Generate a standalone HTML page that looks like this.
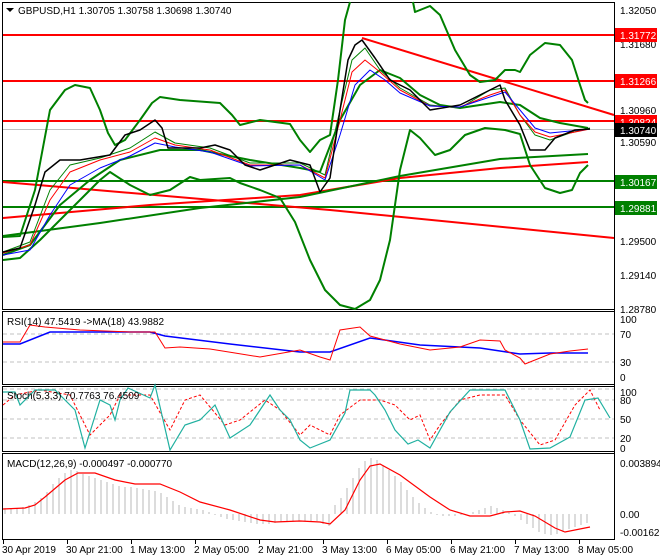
<!DOCTYPE html>
<html><head><meta charset="utf-8"><style>
html,body{margin:0;padding:0;background:#fff;}
svg{display:block;font-family:"Liberation Sans",sans-serif;font-size:10px;}
</style></head><body>
<svg width="660" height="560" viewBox="0 0 660 560" xmlns="http://www.w3.org/2000/svg">
<rect width="660" height="560" fill="#fff"/>
<g fill="none" stroke="#000" stroke-width="1">
<rect x="2.5" y="2.5" width="612" height="307"/>
<rect x="2.5" y="311.5" width="612" height="73"/>
<rect x="2.5" y="386.5" width="612" height="65"/>
<rect x="2.5" y="453.5" width="612" height="86"/>
</g>
<g fill="none" stroke-linejoin="round">
<line x1="3" y1="129.5" x2="614" y2="129.5" stroke="#c0c0c0"/>
<line x1="3" y1="35" x2="614" y2="35" stroke="#f00" stroke-width="2"/>
<line x1="3" y1="81" x2="614" y2="81" stroke="#f00" stroke-width="2"/>
<line x1="3" y1="121" x2="614" y2="121" stroke="#f00" stroke-width="2"/>
<line x1="3" y1="181" x2="614" y2="181" stroke="#008000" stroke-width="2"/>
<line x1="3" y1="207" x2="614" y2="207" stroke="#008000" stroke-width="2"/>
<polyline stroke="#f00" stroke-width="2" points="3,182 330,210 614,238"/>
<polyline stroke="#f00" stroke-width="2" points="362,38 614,115"/>
<polyline stroke="#f00" stroke-width="2" points="3,218 150,205 300,195 400,178 500,168 588,162"/>
<polyline stroke="#008000" stroke-width="2" points="3,236 100,223 200,208 300,197 400,176 500,159 588,154"/>
<polyline stroke="#008000" stroke-width="2" points="3,237 20,236 35,190 50,110 65,90 75,85 90,88 100,110 108,133 115,145 125,140 140,120 152,103 160,97 180,100 220,103 232,115 240,125 260,120 290,124 300,140 310,152 320,140 330,135 338,80 345,20 350,2"/>
<polyline stroke="#008000" stroke-width="2" points="413,2 415,12 430,6 440,15 455,50 470,75 480,82 495,80 505,70 515,70 520,72 530,55 545,43 560,45 572,60 580,85 585,100 588,103"/>
<polyline stroke="#008000" stroke-width="2" points="3,260 20,258 40,240 70,210 100,180 110,172 130,185 150,195 170,190 190,177 200,180 230,178 240,183 260,190 280,198 295,222 310,260 325,290 340,305 355,309 370,300 380,280 390,240 400,170 410,130 420,138 435,155 450,150 465,135 485,128 505,130 520,134 530,165 545,188 560,193 572,190 580,173 588,165"/>
<polyline stroke="#008000" stroke-width="2" points="3,255 30,245 60,205 90,180 120,160 160,150 200,150 250,160 300,168 320,172 340,120 360,85 380,70 400,78 420,95 440,105 460,108 500,102 520,105 540,118 560,123 588,128"/>
<polyline stroke="#008000" stroke-width="1" points="3,252 30,242 50,190 70,165 100,158 130,148 155,132 175,143 210,148 250,163 300,163 325,175 340,110 352,60 365,48 380,70 400,88 430,105 460,108 490,90 505,88 520,115 535,135 550,140 570,133 590,128"/>
<polyline stroke="#f00" stroke-width="1" points="3,253 30,245 50,200 70,172 100,160 130,152 155,138 175,145 210,150 250,165 300,165 325,178 340,120 352,72 365,60 380,72 400,90 430,106 460,107 490,95 505,90 520,115 535,132 550,137 570,133 590,129"/>
<polyline stroke="#00f" stroke-width="1" points="3,255 30,250 50,215 70,185 100,168 130,156 155,143 175,147 210,152 250,166 300,165 325,180 340,135 355,85 370,70 385,80 400,93 430,106 460,107 490,97 505,92 520,110 535,128 550,133 570,131 590,129"/>
<polyline stroke="#000" stroke-width="1.5" points="3,252 20,248 35,205 45,172 60,160 80,160 110,155 125,135 140,130 155,120 162,128 168,148 200,148 215,145 230,150 245,165 260,170 290,160 310,165 320,192 330,178 340,110 348,60 355,45 362,40 375,58 390,80 410,90 430,110 460,105 480,95 500,85 505,100 520,125 530,150 545,150 555,138 575,130 590,129"/>
</g>
<line x1="614.5" y1="2" x2="614.5" y2="540" stroke="#000"/>
<g fill="#000">
<text x="620" y="14">1.32050</text>
<text x="620" y="48">1.31680</text>
<text x="620" y="114">1.30960</text>
<text x="620" y="146">1.30590</text>
<text x="620" y="245">1.29500</text>
<text x="620" y="279">1.29140</text>
<text x="620" y="313">1.28780</text>
</g>
<rect x="615" y="28" width="42" height="14" fill="#f00"/><text x="620" y="39" fill="#fff">1.31772</text>
<rect x="615" y="74" width="42" height="14" fill="#f00"/><text x="620" y="85" fill="#fff">1.31266</text>
<rect x="615" y="115" width="42" height="14" fill="#f00"/><text x="620" y="126" fill="#fff">1.30824</text>
<rect x="615" y="123" width="42" height="14" fill="#000"/><text x="620" y="134" fill="#fff">1.30740</text>
<rect x="615" y="175" width="42" height="14" fill="#008000"/><text x="620" y="186" fill="#fff">1.30167</text>
<rect x="615" y="201" width="42" height="14" fill="#008000"/><text x="620" y="212" fill="#fff">1.29881</text>
<path d="M6,8 h8 l-4,4 z" fill="#000"/>
<text x="18" y="14" fill="#000">GBPUSD,H1  1.30705 1.30758 1.30698 1.30740</text>
<g stroke="#c0c0c0" stroke-dasharray="4,3"><line x1="3" y1="334" x2="614" y2="334"/><line x1="3" y1="362" x2="614" y2="362"/></g>
<polyline fill="none" stroke="#00f" stroke-width="1.5" points="3,344 20,344 50,332 80,332 150,332 165,336 230,344 300,352 330,352 370,338 420,345 480,348 500,351 520,354 550,353 588,353"/>
<polyline fill="none" stroke="#f00" stroke-width="1" points="3,342 20,342 30,325 45,327 80,330 130,332 155,332 165,348 180,347 210,349 235,353 260,357 300,350 320,357 330,360 340,330 360,327 370,336 400,344 430,350 460,347 480,340 500,341 505,350 520,358 525,364 535,360 550,354 570,351 588,349"/>
<text x="7" y="325" fill="#000">RSI(14) 47.5419  -&gt;MA(18) 43.9882</text>
<text x="620" y="323">100</text><text x="620" y="338">70</text><text x="620" y="366">30</text><text x="620" y="381">0</text>
<g stroke="#c0c0c0" stroke-dasharray="4,3"><line x1="3" y1="400" x2="614" y2="400"/><line x1="3" y1="419" x2="614" y2="419"/><line x1="3" y1="438" x2="614" y2="438"/><line x1="3" y1="389" x2="614" y2="389"/></g>
<polyline fill="none" stroke="#f00" stroke-width="1" stroke-dasharray="3,2" points="3,405 15,395 40,390 70,395 90,435 110,415 120,395 150,395 170,430 185,400 200,395 225,425 240,420 265,400 280,410 300,435 310,425 330,435 340,415 360,400 380,400 395,405 410,420 420,415 430,440 440,425 460,400 480,395 505,395 520,420 540,445 555,440 575,405 590,390 600,410"/>
<polyline fill="none" stroke="#20b0a0" stroke-width="1.2" points="3,392 15,392 20,405 35,390 55,390 75,410 85,448 100,400 110,405 115,420 120,400 128,388 150,398 155,385 170,450 185,425 200,420 215,405 230,438 250,425 270,395 280,410 290,420 300,440 310,448 330,440 345,413 350,390 370,390 375,395 385,410 395,430 408,444 418,440 430,448 450,412 470,390 490,390 505,390 520,420 530,449 550,448 570,437 585,400 598,398 610,418"/>
<text x="7" y="399" fill="#000">Stoch(5,3,3) 70.7763 76.4509</text>
<text x="620" y="396">100</text><text x="620" y="404">80</text><text x="620" y="423">50</text><text x="620" y="442">20</text><text x="620" y="452">0</text>
<path stroke="#b8b8b8" stroke-width="1" fill="none" d="M5,514V508M11,514V508M17,514V508M23,514V507M29,514V505M35,514V502M41,514V498M47,514V492M53,514V484M59,514V478M65,514V473M71,514V470M77,514V471M83,514V474M89,514V476M95,514V478M101,514V480M107,514V482M113,514V484M119,514V486M125,514V487M131,514V487M137,514V488M143,514V489M149,514V490M155,514V491M161,514V493M167,514V497M173,514V501M179,514V505M185,514V507M191,514V508M197,514V509M203,514V510M209,514V512M215,514V515M221,514V517M227,514V519M233,514V520M239,514V521M245,514V522M251,514V523M257,514V524M263,514V524M269,514V524M275,514V523M281,514V522M287,514V521M293,514V521M299,514V521M305,514V521M311,514V521M317,514V521M323,514V524M329,514V526M335,514V505M341,514V498M347,514V488M353,514V478M359,514V468M365,514V461M371,514V458M377,514V460M383,514V465M389,514V470M395,514V476M401,514V482M407,514V490M413,514V497M419,514V503M425,514V508M431,514V512M437,514V515M443,514V516M449,514V516M455,514V516M461,514V515M467,514V514M473,514V512M479,514V510M485,514V508M491,514V506M497,514V508M503,514V510M509,514V512M515,514V516M521,514V520M527,514V524M533,514V528M539,514V532M545,514V534M551,514V535M557,514V534M563,514V532M569,514V529M575,514V527M581,514V525M587,514V523"/>
<polyline fill="none" stroke="#f00" stroke-width="1.2" points="3,509 25,508 35,505 45,497 65,480 78,473 95,473 115,480 135,484 160,484 180,492 200,502 230,510 260,520 275,522 300,521 320,522 330,524 345,510 360,480 370,466 380,464 400,475 430,497 450,510 470,516 490,516 505,512 520,511 535,516 555,528 565,532 590,527"/>
<text x="7" y="467" fill="#000">MACD(12,26,9) -0.000497 -0.000770</text>
<text x="620" y="467">0.003894</text><text x="620" y="518">0.00</text><text x="620" y="536">-0.001623</text>
<g stroke="#000"><line x1="3.5" y1="540" x2="3.5" y2="544"/><line x1="67.5" y1="540" x2="67.5" y2="544"/><line x1="131.5" y1="540" x2="131.5" y2="544"/><line x1="195.5" y1="540" x2="195.5" y2="544"/><line x1="259.5" y1="540" x2="259.5" y2="544"/><line x1="323.5" y1="540" x2="323.5" y2="544"/><line x1="387.5" y1="540" x2="387.5" y2="544"/><line x1="451.5" y1="540" x2="451.5" y2="544"/><line x1="515.5" y1="540" x2="515.5" y2="544"/><line x1="579.5" y1="540" x2="579.5" y2="544"/></g>
<g fill="#000">
<text x="2" y="553">30 Apr 2019</text>
<text x="66" y="553">30 Apr 21:00</text>
<text x="130" y="553">1 May 13:00</text>
<text x="194" y="553">2 May 05:00</text>
<text x="258" y="553">2 May 21:00</text>
<text x="322" y="553">3 May 13:00</text>
<text x="386" y="553">6 May 05:00</text>
<text x="450" y="553">6 May 21:00</text>
<text x="514" y="553">7 May 13:00</text>
<text x="578" y="553">8 May 05:00</text>
</g>
</svg>
</body></html>
